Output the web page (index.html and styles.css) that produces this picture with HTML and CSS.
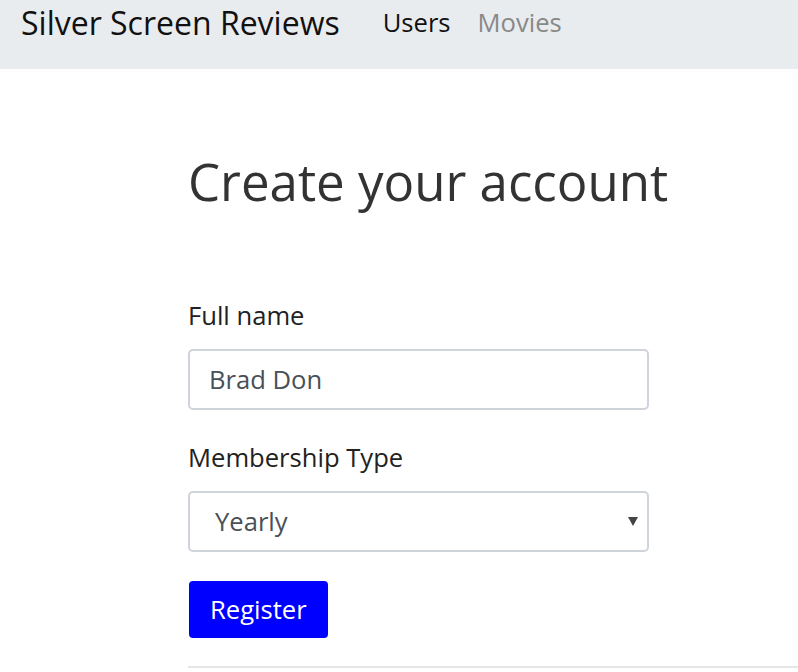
FILE: index.html
```html
<!DOCTYPE html>
<html lang="en">
<head>
<meta charset="utf-8">
<title>Silver Screen Reviews</title>
<link rel="stylesheet" href="styles.css">
</head>
<body>
<nav class="navbar">
  <a class="brand" href="#">Silver Screen Reviews</a>
  <ul class="nav-links">
    <li><a class="nav-link active" href="#">Users</a></li>
    <li><a class="nav-link" href="#">Movies</a></li>
  </ul>
</nav>
<main class="main">
  <h1 class="title">Create your account</h1>
  <form class="form">
    <div class="field">
      <label class="label" for="name">Full name</label>
      <input class="control" id="name" type="text" value="Brad Don">
    </div>
    <div class="field">
      <label class="label" for="type">Membership Type</label>
      <div class="select-wrap">
        <select class="control select" id="type">
          <option>Yearly</option>
          <option>Monthly</option>
        </select>
        <span class="caret"></span>
      </div>
    </div>
    <button class="btn" type="button">Register</button>
  </form>
  <hr class="rule">
</main>
</body>
</html>
```
FILE: styles.css
```css
* { box-sizing: border-box; }
html, body { margin: 0; padding: 0; }
body {
  font-family: "Open Sans", "Noto Sans", sans-serif;
  color: #333;
  background: #fff;
  overflow: hidden;
}
.navbar {
  display: flex;
  align-items: flex-start;
  height: 69px;
  background: #e9ecef;
  padding: 1px 0 0 21px;
}
.brand {
  font-size: 32px;
  line-height: 44px;
  color: #111;
  text-decoration: none;
  margin-right: 43px;
}
.nav-links {
  display: flex;
  gap: 27px;
  list-style: none;
  margin: 0;
  padding: 0;
}
.nav-link {
  display: block;
  font-size: 25.6px;
  line-height: 44px;
  color: #888;
  text-decoration: none;
}
.nav-link.active { color: #111; }
.main {
  padding: 0 0 0 188px;
}
.title {
  margin: 0;
  padding-top: 82px;
  font-size: 51px;
  line-height: 61px;
  font-weight: 400;
  color: #333;
}
.form {
  width: 461px;
  margin-top: 85px;
}
.field { margin-bottom: 29px; }
.label {
  display: block;
  font-size: 25.6px;
  line-height: 38px;
  margin-bottom: 14px;
  color: #222;
}
.control {
  display: block;
  width: 100%;
  height: 61px;
  padding: 0 19px;
  font-family: inherit;
  font-size: 25.6px;
  color: #495057;
  background: #fff;
  border: 2px solid #ced4da;
  border-radius: 5px;
}
.select-wrap { position: relative; }
.select {
  appearance: none;
  -webkit-appearance: none;
  padding-left: 25px;
}
.caret {
  position: absolute;
  right: 11px;
  top: 26px;
  width: 0; height: 0;
  border-left: 5px solid transparent;
  border-right: 5px solid transparent;
  border-top: 9px solid #444;
}
.btn {
  display: block;
  height: 57px;
  padding: 0 21px;
  margin-left: 1px;
  margin-top: 1px;
  font-family: inherit;
  font-size: 25.6px;
  color: #fff;
  background: #0000ff;
  border: none;
  border-radius: 4px;
}
.rule {
  margin: 28px 0 0 0;
  border: none;
  border-top: 2px solid #e6e6e6;
}
```
